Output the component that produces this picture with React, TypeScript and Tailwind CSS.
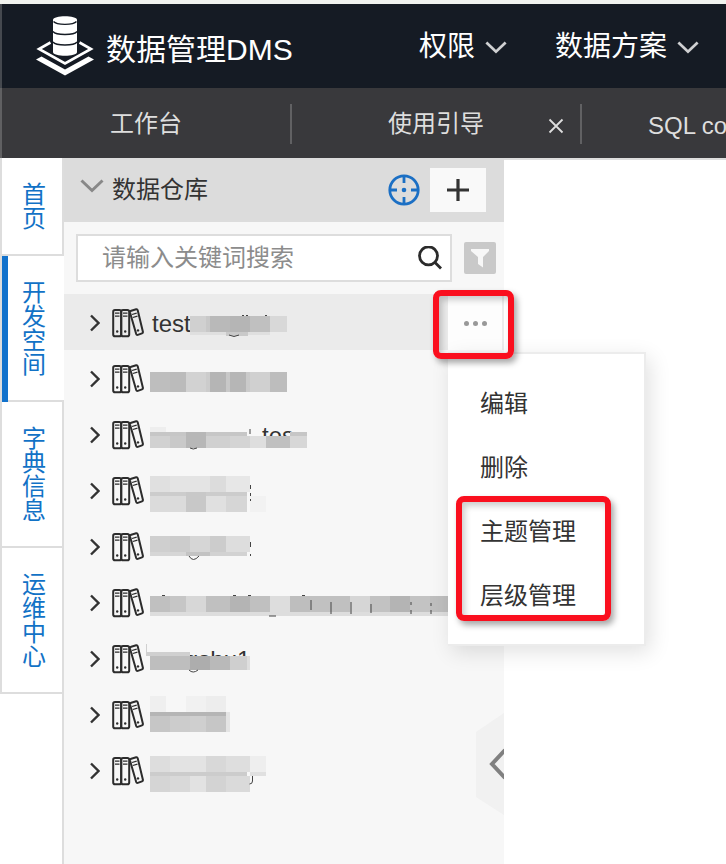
"use client";

import React from 'react';
import clsx from 'clsx';

type Cell = [x: number, y: number, w: number, h: number, fill: string];

interface Warehouse {
  id: number;
  name?: string;
  remnant?: { text: string; x: number; y: number };
  marks?: string;
  cells: Cell[];
}

const railItems = ['首页', '开发空间', '字典信息', '运维中心'];

const warehouses: Warehouse[] = [
  {
    id: 1,
    name: 'test',
    marks: 'M98 21.5h2M102 21.5h2M121 21.5h2M85 41q5 3 10 0',
    cells: [
      [46, 22, 20, 16, '#d0d0d0'], [62, 22, 4, 16, '#c8c8c8'], [66, 22, 20, 16, '#b9b9b9'],
      [86, 22, 20, 16, '#b5b5b5'], [106, 22, 20, 16, '#c0c0c0'], [126, 22, 17, 16, '#d8d8d8'],
      [46, 38, 80, 3, '#dfdfdf'], [82, 38, 22, 4, '#c9c9c9'],
    ],
  },
  {
    id: 2,
    cells: [
      [6, 22, 20, 20, '#bebebe'], [26, 22, 16, 20, '#bbbbbb'], [42, 22, 20, 20, '#d2d2d2'],
      [62, 22, 4, 20, '#cccccc'], [66, 22, 16, 20, '#b5b5b5'], [82, 22, 4, 20, '#c8c8c8'],
      [86, 22, 16, 20, '#b6b6b6'], [102, 22, 4, 20, '#cacaca'], [106, 22, 20, 20, '#d0d0d0'],
      [126, 22, 17, 20, '#bdbdbd'],
    ],
  },
  {
    id: 3,
    remnant: { text: 'tes', x: 118, y: 38 },
    marks: 'M106 23v5M46 42q3 2 7 0',
    cells: [
      [6, 21, 16, 5, '#eeeeee'], [6, 26, 97, 4, '#c6c6c6'], [6, 30, 20, 12, '#d1d1d1'],
      [26, 30, 16, 12, '#c9c9c9'], [42, 26, 20, 16, '#b7b7b7'], [62, 30, 24, 12, '#d0d0d0'],
      [86, 30, 20, 12, '#d4d4d4'], [106, 30, 20, 12, '#dedede'], [122, 30, 24, 12, '#c0c0c0'],
      [146, 26, 17, 4, '#c6c6c6'], [146, 30, 17, 12, '#d7d7d7'],
    ],
  },
  {
    id: 4,
    marks: 'M106.500 23v4M106.500 31v3M106.500 37v2',
    cells: [
      [6, 14, 20, 16, '#e0e0e0'], [26, 14, 40, 16, '#e4e4e4'], [66, 14, 16, 16, '#dcdcdc'],
      [82, 14, 24, 16, '#e7e7e7'], [6, 30, 97, 4, '#cccccc'], [6, 34, 36, 16, '#dbdbdb'],
      [42, 30, 20, 20, '#c8c8c8'], [62, 34, 20, 16, '#e0e0e0'], [82, 34, 21, 16, '#d6d6d6'],
      [106, 34, 16, 16, '#f2f2f2'],
    ],
  },
  {
    id: 5,
    marks: 'M106.500 24v5M106.500 36v2M45 38q4 7 10 0',
    cells: [
      [6, 18, 20, 16, '#cfcfcf'], [26, 18, 20, 16, '#cccccc'], [46, 18, 20, 16, '#d6d6d6'],
      [66, 18, 16, 16, '#cccccc'], [82, 18, 24, 16, '#dddddd'], [6, 34, 40, 4, '#d6d6d6'],
      [42, 34, 24, 4, '#c3c3c3'], [66, 34, 37, 4, '#d2d2d2'],
    ],
  },
  {
    id: 6,
    marks: 'M18 21.500h3M89 21.500h3M104 21.500h3M158 21.500h3M125 42h7M167 26v10M187 28v12M207 28v12M227 30v9M267 28v3M267 36v4M287 29v3M287 36v4',
    cells: [
      [6, 22, 20, 16, '#c0c0c0'], [26, 22, 16, 16, '#c6c6c6'], [42, 22, 20, 16, '#d7d7d7'],
      [62, 22, 24, 16, '#c0c0c0'], [86, 22, 20, 16, '#b4b4b4'], [106, 22, 20, 16, '#c0c0c0'],
      [126, 22, 20, 20, '#dddddd'], [146, 22, 20, 16, '#bebebe'], [166, 22, 20, 16, '#c1c1c1'],
      [186, 22, 20, 16, '#c0c0c0'], [206, 22, 20, 16, '#d6d6d6'], [226, 22, 20, 16, '#c2c2c2'],
      [246, 22, 20, 16, '#b4b4b4'], [266, 22, 20, 16, '#c3c3c3'], [286, 22, 20, 16, '#bebebe'],
      [6, 38, 300, 4, '#dddddd'],
    ],
  },
  {
    id: 7,
    remnant: { text: 'gshu1', x: 41, y: 38 },
    marks: 'M45 40q4 4 9 0',
    cells: [
      [2, 14, 1, 12, '#d0d0d0'], [2, 22, 44, 4, '#d0d0d0'], [46, 14, 58, 7, '#f7f7f7'],
      [6, 26, 40, 14, '#bebebe'], [46, 26, 20, 14, '#adadad'], [66, 26, 20, 14, '#b9b9b9'],
      [86, 26, 20, 14, '#cfcfcf'], [103, 26, 3, 14, '#dedede'], [41, 40, 65, 7, '#f7f7f7'],
    ],
  },
  {
    id: 8,
    cells: [
      [6, 10, 16, 16, '#efefef'], [42, 10, 20, 16, '#f1f1f1'], [62, 10, 20, 16, '#ededed'],
      [6, 26, 76, 4, '#b5b5b5'], [6, 30, 20, 16, '#c6c6c6'], [26, 30, 20, 16, '#cccccc'],
      [46, 30, 16, 16, '#cfcfcf'], [62, 30, 20, 16, '#c6c6c6'], [82, 26, 4, 20, '#e4e4e4'],
    ],
  },
  {
    id: 9,
    marks: 'M108.500 34v5q0 3-3 3',
    cells: [
      [6, 14, 20, 16, '#dddddd'], [26, 14, 36, 16, '#e3e3e3'], [62, 14, 20, 16, '#d8d8d8'],
      [82, 14, 24, 16, '#dedede'], [106, 14, 16, 16, '#eeeeee'], [6, 30, 97, 4, '#cccccc'],
      [106, 30, 16, 4, '#e0e0e0'], [6, 34, 20, 16, '#d5d5d5'], [26, 34, 20, 16, '#d9d9d9'],
      [46, 34, 20, 16, '#e2e2e2'], [62, 34, 20, 16, '#d3d3d3'], [82, 34, 24, 16, '#dadada'],
    ],
  },
];

function Logo() {
  return (
    <svg className="w-[58px] h-[62px] shrink-0" viewBox="0 0 58 62" aria-hidden="true">
      <path d="M14.500 27.500 3 34 29 48.500 55 34 43.500 27.500" fill="none" stroke="#fff" strokeWidth="2.600" />
      <path d="M0 44.500 5.500 41.500 29 54.500 52.500 41.500 58 44.500 29 60.500Z" fill="#fff" />
      <path d="M17 5v32c0 5 24 5 24 0V5c0-5-24-5-24 0Z" fill="#fff" />
      <path d="M17.500 6.500c3 3.700 20 3.700 23 0M17 16.500c3 4 21 4 24 0M17 27c3 4 21 4 24 0" fill="none" stroke="#151b24" strokeWidth="1.300" />
    </svg>
  );
}

function ChevronDown({ className }: { className?: string }) {
  return (
    <svg className={className} viewBox="0 0 24 14" fill="none" stroke="currentColor" strokeWidth="3" aria-hidden="true">
      <path d="M1.500 1.500 12 11.500 22.500 1.500" />
    </svg>
  );
}

function BinderIcon() {
  return (
    <svg className="w-8 h-[30px] shrink-0" viewBox="0 0 32 30" fill="none" stroke="#2c2c2c" strokeWidth="2" strokeLinejoin="round" aria-hidden="true">
      <rect x="1.200" y="2" width="8" height="26.200" rx="1.800" />
      <rect x="9.200" y="2" width="8" height="26.200" rx="1.800" />
      <path d="M19.200 2.800 24.200 1.300Q25.300 1 25.700 2.200L30.900 23.700Q31.100 25 30 25.400L25.800 26.900Q24.600 27.200 24.200 26L18 4.500Q17.800 3.200 19.200 2.800Z" />
      <path d="M3 5.200h4.500M3 8.200h4.500M11 5.200h4.500M11 8.200h4.500M20 6.500l4.700-1.400M20.800 9.500l4.700-1.400" strokeWidth="1.300" />
      <g fill="#2c2c2c" stroke="none">
        <circle cx="5.200" cy="23.500" r="1.200" />
        <circle cx="13.200" cy="23.500" r="1.200" />
        <circle cx="26" cy="22.400" r="1.200" />
      </g>
    </svg>
  );
}

function Mosaic({ item }: { item: Warehouse }) {
  return (
    <svg className="absolute left-20 top-0 w-[310px] h-14 pointer-events-none" viewBox="0 0 310 56" aria-hidden="true">
      {item.remnant && (
        <text x={item.remnant.x} y={item.remnant.y} fontSize="24" fill="#333">{item.remnant.text}</text>
      )}
      {item.cells.map(([x, y, w, h, fill], idx) => (
        <rect key={idx} x={x} y={y} width={w} height={h} fill={fill} shapeRendering="crispEdges" />
      ))}
      {item.marks && <path d={item.marks} fill="none" stroke="#444" strokeWidth="1" />}
    </svg>
  );
}

function ContextMenu() {
  const itemClass = 'block w-full h-16 pl-8 text-left text-2xl text-[#333]';
  return (
    <div role="menu" className="absolute left-0 top-[58px] z-10 w-[198px] pt-[18px] pb-4 bg-white border-t-2 border-r-2 border-b-2 border-[#ececec] shadow-[4px_6px_20px_rgba(0,0,0,0.12)]">
      <button role="menuitem" className={itemClass}>编辑</button>
      <button role="menuitem" className={itemClass}>删除</button>
      <div className="relative">
        <button role="menuitem" className={itemClass}>主题管理</button>
        <button role="menuitem" className={itemClass}>层级管理</button>
        <div className="absolute left-2 right-[33px] -top-1 bottom-[7px] border-[6px] border-[#fa0f1e] rounded-lg shadow-[3px_4px_6px_rgba(0,0,0,0.35),inset_3px_4px_6px_rgba(0,0,0,0.2)] pointer-events-none" />
      </div>
    </div>
  );
}

function Header() {
  return (
    <header className="h-[84px] pl-[34px] flex items-center bg-[#151b24] border-l-2 border-[#45494f] overflow-hidden whitespace-nowrap text-white">
      <Logo />
      <h1 className="ml-3 w-[313px] shrink-0 pt-2 text-[30px] leading-9">数据管理DMS</h1>
      <nav className="pt-0.5 flex gap-12 text-[28px] leading-9">
        <button className="flex items-center gap-2.5">
          权限
          <ChevronDown className="w-[22px] h-[13px] text-[#cfd0d2]" />
        </button>
        <button className="flex items-center gap-2.5">
          数据方案
          <ChevronDown className="w-[22px] h-[13px] text-[#cfd0d2]" />
        </button>
      </nav>
    </header>
  );
}

function TabBar() {
  return (
    <div className="h-[70px] pt-0.5 flex items-center bg-[#39393c] border-l-2 border-[#606062] overflow-hidden whitespace-nowrap text-2xl text-[#dedede]">
      <button className="w-[290px] h-10 shrink-0 border-r-2 border-[#616163]">工作台</button>
      <div className="w-[290px] h-10 shrink-0 flex items-center border-r-2 border-[#616163]">
        <button className="flex-1 pl-12">使用引导</button>
        <button aria-label="关闭" className="w-12 flex justify-center pt-1">
          <svg className="w-4 h-4" viewBox="0 0 16 16" stroke="currentColor" strokeWidth="1.800" aria-hidden="true">
            <path d="M1.500 1.500 14.500 14.500M14.500 1.500 1.500 14.500" />
          </svg>
        </button>
      </div>
      <button className="shrink-0 pl-[66px] pt-1">SQL console</button>
    </div>
  );
}

function Rail() {
  return (
    <nav className="w-16 shrink-0 flex flex-col bg-white">
      {railItems.map((label, idx) => (
        <a
          key={label}
          href="#"
          className={clsx(
            'relative block pt-[25px] pb-[23px] pl-5 border-l-2 border-b-2 border-[#dddddd] text-2xl leading-6 text-[#1272c6]',
            idx !== 1 && 'border-r-2',
          )}
        >
          {idx === 1 && <span className="absolute left-0 top-0 -bottom-0.5 w-1.5 bg-[#1272cc]" />}
          <span className="block w-6 break-all">{label}</span>
        </a>
      ))}
      <div className="flex-1 border-r-2 border-[#dddddd]" />
    </nav>
  );
}

function Sidebar() {
  return (
    <aside className="relative w-[440px] shrink-0 bg-[#f7f7f7]">
      <div className="h-16 pl-4 pr-[18px] flex items-center bg-[#dcdcdc]">
        <ChevronDown className="w-6 h-3.5 mb-2 text-[#888]" />
        <h2 className="ml-2 flex-1 text-2xl text-[#333]">数据仓库</h2>
        <button aria-label="定位" className="mr-2.5 text-[#1b6fc4]">
          <svg className="w-8 h-8" viewBox="0 0 32 32" fill="none" stroke="currentColor" strokeWidth="2.800" aria-hidden="true">
            <circle cx="16" cy="16" r="14.200" />
            <path d="M16 2v7M16 23v7M2 16h7M23 16h7" />
            <circle cx="16" cy="16" r="2.300" fill="currentColor" stroke="none" />
          </svg>
        </button>
        <button aria-label="新建" className="w-14 h-11 flex items-center justify-center bg-[#f9f9f9] text-[#333]">
          <svg className="w-[22px] h-[22px]" viewBox="0 0 22 22" stroke="currentColor" strokeWidth="3.200" aria-hidden="true">
            <path d="M11 0v22M0 11h22" />
          </svg>
        </button>
      </div>

      <div className="h-[72px] pl-3 pr-2 flex items-center gap-3">
        <div className="flex-1 h-12 pl-6 pr-2 flex items-center bg-white border-2 border-[#dddddd]">
          <input
            type="text"
            aria-label="请输入关键词搜索"
            placeholder="请输入关键词搜索"
            className="flex-1 min-w-0 text-2xl text-[#333] placeholder:text-[#8c8c8c] outline-none"
          />
          <button aria-label="搜索" className="text-[#2b2b2b]">
            <svg className="w-6 h-6" viewBox="0 0 24 24" fill="none" stroke="currentColor" strokeWidth="2.800" aria-hidden="true">
              <circle cx="10.500" cy="9.800" r="9" />
              <path d="M17 16.500 23 22.500" />
            </svg>
          </button>
        </div>
        <button aria-label="筛选" className="w-8 h-8 flex items-center justify-center bg-[#c9c9c9] rounded-xs">
          <svg className="w-5 h-5" viewBox="0 0 20 20" fill="#f7f7f7" aria-hidden="true">
            <path d="M1 1h18v2l-6 6v10.500l-5-3.500V9L1 3Z" />
          </svg>
        </button>
      </div>

      <ul>
        {warehouses.map((item, idx) => (
          <li key={item.id} className={clsx('relative h-14 flex justify-between', idx === 0 && 'bg-[#ebebeb]')}>
            <button className="flex-1 pl-[26px] pt-0.5 flex items-center text-2xl text-[#333]" aria-label={item.name ?? `数据仓库 ${item.id}`}>
              <svg className="w-2.5 h-[18px] mr-3" viewBox="0 0 10 18" fill="none" stroke="#333" strokeWidth="2.400" aria-hidden="true">
                <path d="M1 1.500 8.500 9 1 16.500" />
              </svg>
              <BinderIcon />
              <span className="ml-2 pt-0.5">{item.name}</span>
            </button>
            <Mosaic item={item} />
            {idx === 0 && (
              <div className="relative w-14">
                <button aria-label="更多" className="w-14 h-14 pt-0.5 flex items-center justify-center gap-1 bg-[#fdfdfd] border-r-2 border-[#ececec]">
                  <span className="w-[5px] h-[5px] rounded-full bg-[#999]" />
                  <span className="w-[5px] h-[5px] rounded-full bg-[#999]" />
                  <span className="w-[5px] h-[5px] rounded-full bg-[#999]" />
                </button>
                <ContextMenu />
                <div className="absolute -left-[15px] -right-2.5 -top-1 -bottom-[9px] z-20 border-[6px] border-[#fa0f1e] rounded-lg shadow-[3px_4px_6px_rgba(0,0,0,0.35),inset_3px_4px_6px_rgba(0,0,0,0.2)] pointer-events-none" />
              </div>
            )}
          </li>
        ))}
      </ul>

      {/* Collapse handle */}
      <button aria-label="收起" className="absolute right-0 top-[555px]">
        <svg className="block w-7 h-[102px]" viewBox="0 0 28 102" fill="none" aria-hidden="true">
          <path d="M0 19 28 0v102L0 84Z" fill="#f1f1f1" />
          <path d="M29 37 16 51l13 14" stroke="#808080" strokeWidth="4" />
        </svg>
      </button>
    </aside>
  );
}

export default function App() {
  return (
    <div className="min-h-screen flex flex-col overflow-x-hidden bg-white border-t-4 border-[#f1f3ef] font-['Liberation_Sans','Noto_Sans_CJK_SC',sans-serif]">
      <Header />
      <TabBar />
      <div className="flex-1 flex">
        <Rail />
        <Sidebar />
        <main className="flex-1 border-t-2 border-[#dddddd]" />
      </div>
    </div>
  );
}
